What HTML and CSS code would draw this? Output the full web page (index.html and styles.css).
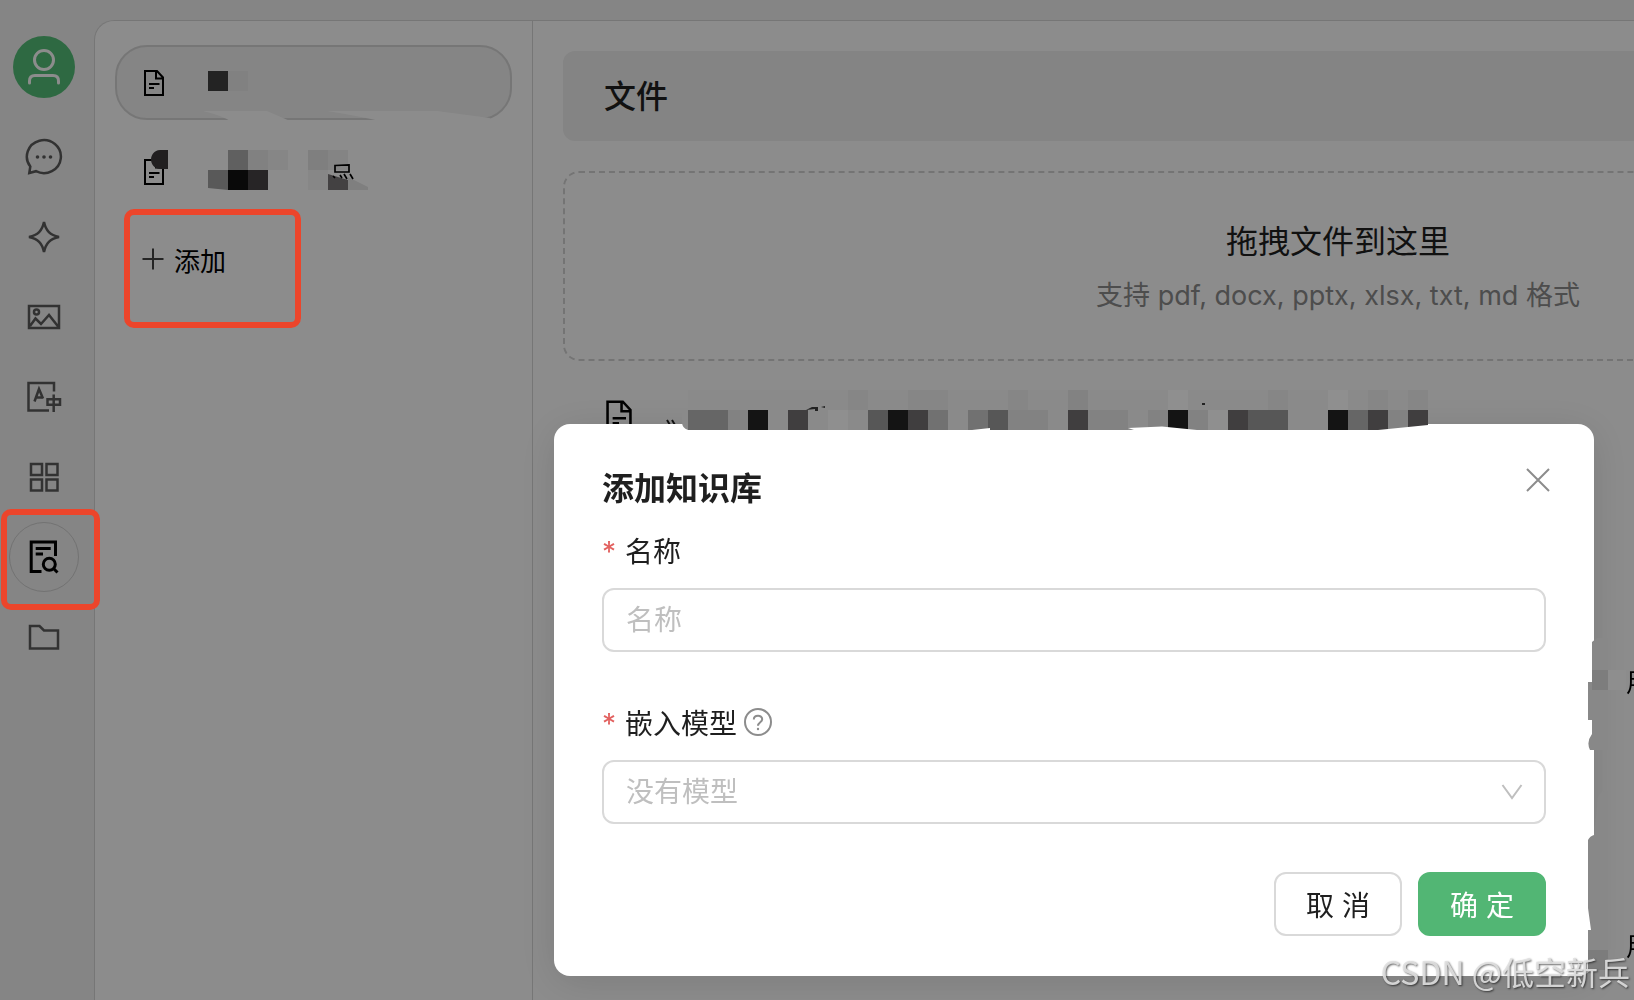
FILE: index.html
```html
<!DOCTYPE html>
<html lang="zh-CN">
<head>
  <meta charset="UTF-8">
  <title>知识库</title>
  <link rel="stylesheet" href="styles.css">
</head>
<body>
  <svg class="defs" width="0" height="0" aria-hidden="true">
    <symbol id="icon-file" viewBox="0 0 22 28">
      <path d="M2 2H14L20 8.500V26H2Z M13 2V9.500H20 M6 15H16.500 M6 19H11"/>
    </symbol>
  </svg>

  <div class="app">
    <nav class="sidebar">
      <button class="avatar" aria-label="账户">
        <svg viewBox="0 0 62 62"><circle cx="31" cy="24" r="9.500"/><path d="M16.500 47V45Q16.500 39.500 22 39.500H40Q45.500 39.500 45.500 45V47"/></svg>
      </button>
      <div class="nav-list">
        <a class="nav-item" href="#" aria-label="聊天">
          <svg viewBox="0 0 40 40"><path d="M5.300 36L6.300 29.500A17 16.500 0 1 1 12 34.200Z"/><circle class="dot" cx="13.500" cy="20" r="1.800"/><circle class="dot" cx="20" cy="20" r="1.800"/><circle class="dot" cx="26.500" cy="20" r="1.800"/></svg>
        </a>
        <a class="nav-item" href="#" aria-label="助手">
          <svg viewBox="0 0 40 40"><path d="M20 5C22 14 26 18 35 20C26 22 22 26 20 35C18 26 14 22 5 20C14 18 18 14 20 5Z"/></svg>
        </a>
        <a class="nav-item" href="#" aria-label="绘画">
          <svg viewBox="0 0 40 40"><path d="M5 9H35V31H5Z M6 29L11.500 21.500L17 27L25 18L34.500 30"/><circle cx="12.500" cy="15" r="2.500"/></svg>
        </a>
        <a class="nav-item" href="#" aria-label="翻译">
          <svg viewBox="0 0 40 40"><path d="M30 14.500V6H4.500V33.500H25 M10.500 24.500L15 12L19 21.500 M12.500 20.500H19 M23.500 22.300H36V27.700H23.500Z M29.700 17.500V35"/></svg>
        </a>
        <a class="nav-item" href="#" aria-label="小程序">
          <svg viewBox="0 0 40 40"><path d="M7 7H18V18H7Z M22.500 7H33.500V18H22.500Z M7 22.500H18V33.500H7Z M22.500 22.500H33.500V33.500H22.500Z"/></svg>
        </a>
        <a class="nav-item active" href="#" aria-label="知识库">
          <svg viewBox="0 0 40 40"><path d="M31.500 19V5H7.200V34.500H17.500 M11.700 11.500H26.700 M11.700 17H19"/><circle cx="25.300" cy="27.300" r="6"/><path d="M29.800 31.800L33.500 35.500"/></svg>
          <span class="highlight highlight-nav"></span>
        </a>
        <a class="nav-item" href="#" aria-label="文件">
          <svg viewBox="0 0 40 40"><path d="M6 9H15.500L20 13.500H34V31.500H6Z"/></svg>
        </a>
      </div>
    </nav>

    <main class="workspace">
      <aside class="base-list">
        <div class="base-item selected">
          <svg class="file-icon"><use href="#icon-file"/></svg>
          <svg class="redacted" viewBox="0 0 160 74">
            <path fill="#404040" d="M0 25h20v20H0z"/><path fill="#ececec" d="M20 25h20v20H20z"/>
            <path fill="#fff" d="M-5 65H59L82 75H22Q15 70 -5 65Z M119 65H229L282 72L281 75H172Q150 70 119 65Z"/>
          </svg>
        </div>
        <div class="base-item">
          <svg class="file-icon"><use href="#icon-file"/></svg>
          <svg class="redacted" viewBox="0 0 160 74">
            <path fill="#3d3a3b" d="M-40 15H-48C-60 16 -60 33 -48 34H-40Z"/>
            <path fill="#afafaf" d="M20 15h20v20H20z"/><path fill="#ececec" d="M40 15h20v20H40z"/><path fill="#f5f5f5" d="M60 15h20v20H60z"/>
            <path fill="#a2a2a2" d="M0 35h20v20L0 53z"/><path fill="#111" d="M20 35h20v20H20z"/><path fill="#474445" d="M40 35h20v20H40z"/>
            <path fill="#e7e7e7" d="M100 15h20v20H100z"/><path fill="#f1f1f1" d="M120 15h20v20H120z"/><path fill="#f6f6f6" d="M100 35h20v20H100z"/>
            <path fill="#7b7778" d="M120 39L140 45V55H120z"/><path fill="#e7e7e7" d="M140 42L160 52V55H140z"/>
            <path fill="none" stroke="#000" stroke-width="1.700" d="M127 30.500L141 30V37H127Z M125 41L127 43 M132 40L134 43 M136 39L139 44 M142 39L145 44"/>
          </svg>
        </div>
        <button class="add-button">
          <svg viewBox="0 0 22 22"><path d="M11 0.500V21.500M0.500 11H21.500"/></svg>
          <span>添加</span>
          <span class="highlight highlight-add"></span>
        </button>
      </aside>

      <section class="content">
        <h1 class="content-header">文件</h1>
        <div class="dropzone">
          <p class="drop-title">拖拽文件到这里</p>
          <p class="drop-hint">支持 pdf, docx, pptx, xlsx, txt, md 格式</p>
        </div>
        <div class="file-row">
          <svg class="file-icon large"><use href="#icon-file"/></svg>
          <svg class="row-mark" viewBox="0 0 12 12"><path d="M2 3L5 8 M7 3L10 8"/></svg>
        </div>
      </section>
    </main>
  </div>

  <div class="mask">
    <form class="modal" role="dialog" aria-labelledby="modal-title">
      <div class="modal-header">
        <h2 id="modal-title">添加知识库</h2>
        <button class="close" type="button" aria-label="关闭">
          <svg viewBox="0 0 28 28"><path d="M3 3L25 25M25 3L3 25"/></svg>
        </button>
      </div>

      <div class="field">
        <label for="name"><span class="required">*</span>名称</label>
        <input id="name" type="text" placeholder="名称">
      </div>

      <div class="field">
        <label for="model"><span class="required">*</span>嵌入模型
          <svg class="help" viewBox="0 0 28 28"><circle cx="14" cy="14" r="13"/><path d="M9.800 11.500C9.800 6.500 18.200 6.500 18.200 11.300C18.200 14.300 14 14.200 14 17.800"/><circle class="dot" cx="14" cy="21" r="1.200"/></svg>
        </label>
        <div class="select-wrap">
          <select id="model">
            <option>没有模型</option>
          </select>
          <svg class="chevron" viewBox="0 0 22 16"><path d="M1.500 1L11 14L20.500 1"/></svg>
        </div>
      </div>

      <div class="modal-footer">
        <button class="btn" type="button">取 消</button>
        <button class="btn primary" type="submit">确 定</button>
      </div>

      <!-- pixelated file name -->
      <svg class="redacted-top" width="760" height="40" viewBox="0 0 760 40" aria-hidden="true">
        <path fill="#8a8a8a" d="M6 0H746V40H6Q0 38 0 32V20H6Z"/>
        <path fill="#868686" d="M166 0h20v20h-20z M226 0h40v20h-40z M326 0h20v20h-20z M586 0h20v20h-20z M686 0h20v20h-20z M726 0h20v20h-20z"/>
        <path fill="#828282" d="M386 0h20v20h-20z"/>
        <path fill="#8f8f8f" d="M486 0h20v20h-20z M646 0h20v20h-20z M526 20h20v20h-20z M146 20h20v20h-20z"/>
        <path fill="#828282" d="M46 20h20v20h-20z M326 20h40v20h-40z M406 20h40v20h-40z M466 20h20v20h-20z M506 20h20v20h-20z M706 20h20v20h-20z"/>
        <path fill="#717171" d="M246 20h20v20h-20z M286 20h20v20h-20z"/>
        <path fill="#666" d="M6 20h40v20h-40z M666 20h20v20h-20z"/>
        <path fill="#575757" d="M186 20h20v20h-20z M306 20h20v20h-20z M566 20h40v20h-40z"/>
        <path fill="#403e3f" d="M106 20h20v20h-20z M226 20h20v20h-20z M386 20h20v20h-20z M546 20h20v20h-20z M686 20h20v20h-20z M726 20h20v20h-20z"/>
        <path fill="#141414" d="M66 20h20v20h-20z M206 20h20v20h-20z M486 20h20v20h-20z M646 20h20v20h-20z"/>
        <path fill="#222" d="M124 20L130 17H136V21H133V19Z M139 17L143 16V18Z M520 13h3v2h-3z"/>
        <path fill="#fff" d="M290 40L308 38V40Z M446 38L480 36.500L515 40H452Z M696 40L746 35V40Z"/>
      </svg>
      <svg class="redacted-side" width="46" height="350" viewBox="0 0 46 350" aria-hidden="true">
        <path fill="#888" d="M4 4L14 -4H20V112H2Q-2 104 4 96V82H0V44H4Z"/>
        <path fill="#7d7d7d" d="M4 32H20V52H4Z"/><path fill="#8e8e8e" d="M20 32H38V52H20Z"/>
        <path fill="#888" d="M0 202Q2 198 6 197L10 160Q12 154 16 153H20V292H3L0 270Z M0 292H20V330H0Z"/>
        <path fill="#7c7c7c" d="M0 312H20V332H0Z"/>
        <text x="38" y="54">用</text>
        <text x="38" y="318">用</text>
      </svg>
    </form>
  </div>
  <div class="watermark">CSDN @低空新兵</div>
</body>
</html>
```
FILE: styles.css
```css
* { box-sizing: border-box; }
html, body { height: 100%; margin: 0; }
body {
  overflow: hidden;
  background: #f2f2f2;
  color: #000;
  font-family: Inter, "Noto Sans CJK SC", sans-serif;
  font-size: 26px;
}
button, input, select { font: inherit; }
h1, h2, p { margin: 0; }
svg { display: block; flex: none; }
.defs { position: absolute; }

.app { display: flex; height: 100vh; padding-top: 20px; }

/* sidebar */
.sidebar {
  flex: none;
  width: 94px;
  padding: 16px 15px 0 9px;
  display: flex;
  flex-direction: column;
  align-items: center;
  gap: 24px;
}
.avatar {
  width: 62px;
  height: 62px;
  padding: 0;
  border: none;
  border-radius: 50%;
  background: #54c078;
}
.avatar svg { width: 62px; height: 62px; fill: none; stroke: #fff; stroke-width: 3; stroke-linecap: round; }
.nav-list { display: flex; flex-direction: column; gap: 10px; }
.nav-item {
  position: relative;
  display: flex;
  align-items: center;
  justify-content: center;
  width: 70px;
  height: 70px;
  border-radius: 50%;
  color: #5c5c5c;
}
.nav-item svg { width: 40px; height: 40px; fill: none; stroke: currentColor; stroke-width: 2.5; }
.nav-item .dot { fill: currentColor; stroke: none; }
.nav-item.active { border: 1px solid #d0d0d0; color: #000; }
.nav-item.active svg { stroke-width: 3; }

.highlight {
  position: absolute;
  z-index: 20;
  border: 6px solid #ec452b;
  border-radius: 10px;
  pointer-events: none;
}
.highlight-nav { inset: -14px -22px -19px -9px; }
.highlight-add { inset: -14px auto auto -18px; width: 177px; height: 119px; }

/* main panel */
.workspace {
  flex: 1;
  min-width: 0;
  display: flex;
  overflow: hidden;
  border: 1px solid #d8d8d8;
  border-width: 1px 0 0 1px;
  border-radius: 20px 0 0 0;
  background: #fff;
}
.base-list {
  flex: none;
  width: 438px;
  padding: 24px 20px;
  border-right: 1px solid #d8d8d8;
  display: flex;
  flex-direction: column;
  align-items: stretch;
  gap: 14px;
}
.base-item {
  display: flex;
  align-items: center;
  gap: 43px;
  height: 75px;
  padding: 0 26px;
  border: 2px solid transparent;
  border-radius: 32px;
}
.base-item.selected { border-color: #d8d8d8; background: #f2f2f2; }
.file-icon { width: 22px; height: 28px; fill: none; stroke: #000; stroke-width: 2; }
.file-icon.large { width: 28px; height: 36px; }
.redacted { width: 160px; height: 74px; overflow: visible; }
.add-button {
  position: relative;
  align-self: flex-start;
  display: flex;
  align-items: center;
  gap: 10px;
  height: 72px;
  margin-left: 27px;
  padding: 0;
  border: none;
  background: none;
}
.add-button svg { width: 22px; height: 22px; stroke: #444; stroke-width: 2; }

.content { flex: none; min-width: 1610px; padding: 30px; }
.content-header {
  height: 90px;
  padding-left: 41px;
  border-radius: 12px;
  background: #f0f0f0;
  color: #1f1f1f;
  font-size: 32px;
  font-weight: 500;
  line-height: 92px;
}
.dropzone {
  height: 190px;
  margin-top: 30px;
  padding-top: 43px;
  border: 2px dashed #d4d4d4;
  border-radius: 16px;
  text-align: center;
}
.drop-title { color: #1f1f1f; font-size: 32px; line-height: 52px; }
.drop-hint { color: #8c8c8c; font-size: 27px; line-height: 56px; }
.file-row { display: flex; gap: 32px; padding: 38px 42px; }
.row-mark { width: 12px; height: 12px; margin-top: 18px; fill: none; stroke: #222; stroke-width: 2; }

/* modal */
.mask {
  position: fixed;
  inset: 0;
  z-index: 10;
  display: flex;
  align-items: flex-end;
  padding: 0 40px 24px 554px;
  background: rgba(0, 0, 0, 0.45);
}
.modal {
  position: relative;
  flex: 1;
  min-width: 0;
  padding: 40px 48px;
  border-radius: 16px;
  background: #fff;
  box-shadow: 0 6px 40px rgba(0, 0, 0, 0.12);
  color: #1f1f1f;
  font-size: 28px;
}
.modal-header { display: flex; justify-content: space-between; margin-bottom: 14px; }
.modal h2 { font-size: 32px; font-weight: 700; line-height: 50px; }
.close { width: 28px; height: 28px; margin: 2px -6px 0 0; padding: 0; border: none; background: none; }
.close svg { width: 28px; height: 28px; stroke: #8c8c8c; stroke-width: 2; }
.field { margin-bottom: 48px; }
.field label { display: flex; align-items: center; height: 44px; margin-bottom: 16px; }
.required { width: 23px; padding-top: 4px; color: #e2615f; }
.help { width: 28px; height: 28px; margin-left: 7px; fill: none; stroke: #8c8c8c; stroke-width: 2; }
.help .dot { fill: #8c8c8c; stroke: none; }
.field input, .field select {
  display: block;
  width: 100%;
  height: 64px;
  padding: 0 22px;
  border: 2px solid #d9d9d9;
  border-radius: 12px;
  background: #fff;
  color: #bfbfbf;
  appearance: none;
}
.field input::placeholder { color: #bfbfbf; }
.select-wrap { position: relative; }
.chevron {
  position: absolute;
  top: 24px;
  right: 23px;
  width: 22px;
  height: 16px;
  fill: none;
  stroke: #bfbfbf;
  stroke-width: 2;
  pointer-events: none;
}
.modal-footer { display: flex; justify-content: flex-end; gap: 16px; }
.btn {
  width: 128px;
  height: 64px;
  padding: 0;
  border: 2px solid #d9d9d9;
  border-radius: 12px;
  background: #fff;
  color: #1f1f1f;
}
.btn.primary { border-color: #52b674; background: #52b674; color: #fff; }

.redacted-top { position: absolute; top: -34px; left: 128px; }
.redacted-side { position: absolute; top: 214px; right: -40px; fill: #000; font-size: 26px; }

.watermark {
  position: fixed;
  right: 4px;
  bottom: 5px;
  z-index: 30;
  color: rgba(225, 225, 225, 0.9);
  font-family: "Noto Sans CJK SC", sans-serif;
  font-size: 32px;
  line-height: 48px;
  text-shadow: 1px 1px 2px rgba(0, 0, 0, 0.6);
}
```
